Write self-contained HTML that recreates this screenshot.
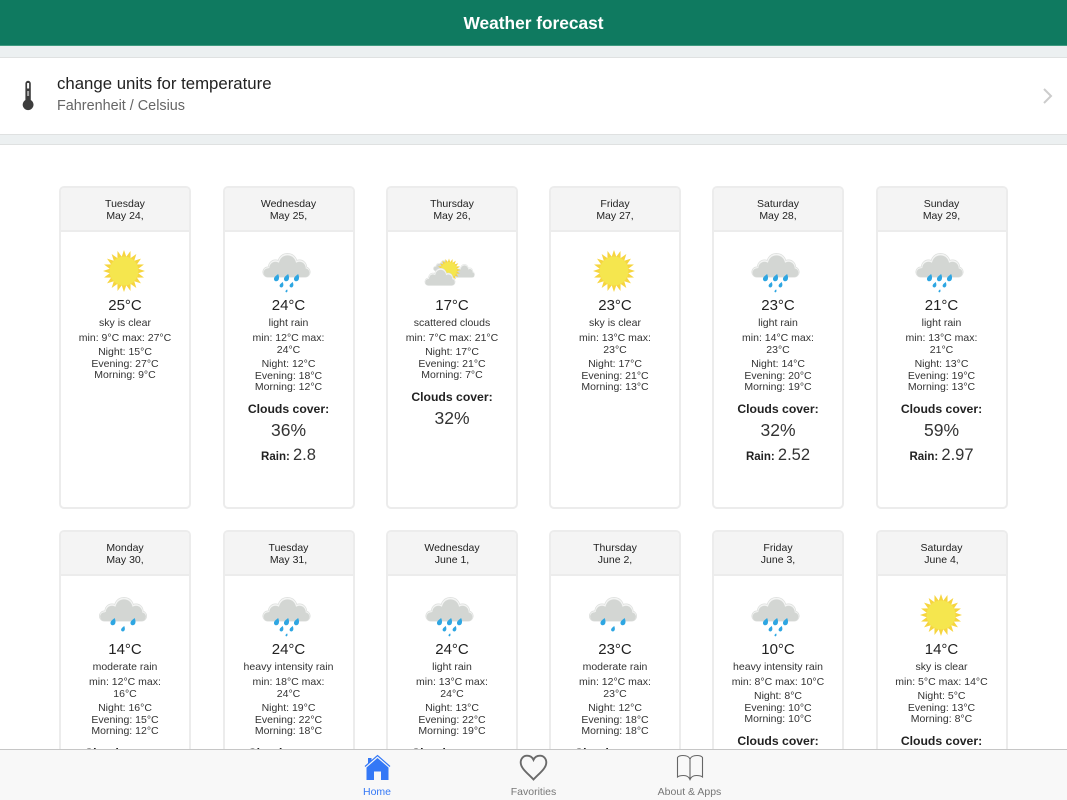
<!DOCTYPE html>
<html><head><meta charset="utf-8"><title>Weather forecast</title>
<style>
*{box-sizing:border-box}
html,body{margin:0;padding:0;width:1067px;height:800px;overflow:hidden;background:#fff;font-family:"Liberation Sans",sans-serif;color:#222}
#w{position:relative;width:1067px;height:800px;overflow:hidden;background:#fff}
.top{position:absolute;left:0;top:0;width:1067px;height:46px;background:#0f7a60;border-bottom:1px solid #3f9a80;color:#fff;font-weight:bold;font-size:17.3px;line-height:47px;text-align:center}
.band{position:absolute;left:0;width:1067px;background:#ecf0f1}
.row{position:absolute;left:0;top:57px;width:1067px;height:78px;background:#fff;border-top:1px solid #dfe1e1;border-bottom:1px solid #dfe1e1}
.t1{position:absolute;left:57px;top:84px;transform:translateY(-50%);font-size:16.8px;line-height:20px;color:#222;white-space:nowrap}
.t2{position:absolute;left:57px;top:106px;transform:translateY(-50%);font-size:14.4px;line-height:18px;color:#666;white-space:nowrap}
.c{position:absolute;width:132px;height:323px;background:#fff;border:2px solid #ececec;border-radius:5px;text-align:center;overflow:hidden;font-size:10.5px;line-height:11.5px}
.b{height:219px;border-bottom:0;border-radius:5px 5px 0 0}
.h{height:46px;background:#f4f4f4;border-bottom:2px solid #ececec;padding-top:13px;line-height:11.5px;color:#222;margin:-2px -2px 0;padding-left:2px;padding-right:2px}
.c svg{display:block;margin:14px auto 0;width:60px;height:50px}
.tp{font-size:15px;line-height:18px;height:18px;margin-top:1px}
.ds{margin-top:2px;height:12px;line-height:12px;color:#333;white-space:nowrap}
.mm{margin-top:3px;line-height:12px;white-space:nowrap;color:#333}
.nn{margin-top:3px;color:#333;white-space:nowrap}
.cc{margin-top:3px;font-weight:bold;font-size:12.2px;line-height:24px;color:#222}
.pc{margin-top:-.5px;font-size:17.5px;line-height:20px;color:#333}
.rn{margin-top:5px;font-weight:bold;font-size:11.5px;line-height:20px;color:#222}
.rn span{font-weight:normal;font-size:16.5px;color:#333}
.bar{position:absolute;left:0;top:749px;width:1067px;height:51px;background:#f8f8f8;border-top:1px solid #c6c6c6}
.lb{position:absolute;top:792px;transform:translate(-50%,-50%);font-size:10.5px;line-height:12px;color:#777;white-space:nowrap}
</style></head><body><div id="w">
<svg width="0" height="0" style="position:absolute">
<defs>
<g id="st">
<polygon fill="#f6d53f" points="21,0 14.32,2.27 19.97,6.49 12.92,6.58 16.99,12.35 10.25,10.25 12.35,16.99 6.58,12.92 6.49,19.97 2.27,14.32 0,21 -2.27,14.32 -6.49,19.97 -6.58,12.92 -12.35,16.99 -10.25,10.25 -16.99,12.35 -12.92,6.58 -19.97,6.49 -14.32,2.27 -21,0 -14.32,-2.27 -19.97,-6.49 -12.92,-6.58 -16.99,-12.35 -10.25,-10.25 -12.35,-16.99 -6.58,-12.92 -6.49,-19.97 -2.27,-14.32 0,-21 2.27,-14.32 6.49,-19.97 6.58,-12.92 12.35,-16.99 10.25,-10.25 16.99,-12.35 12.92,-6.58 19.97,-6.49 14.32,-2.27"/>
<circle r="14.5" fill="#f5e64e"/>
</g>
<symbol id="sun" viewBox="-29 -25 60 50"><use href="#st"/></symbol>
<g id="cl">
<g fill="#dcdedc">
<circle cx="1" cy="-8" r="10"/><circle cx="-11" cy="-4" r="7.5"/><circle cx="13" cy="-4" r="7.5"/><circle cx="-18.5" cy="1" r="5.5"/><circle cx="18.5" cy="1" r="5.5"/><rect x="-18" y="-3" width="36" height="9.5"/>
</g>
<g fill="#f4f5f4">
<circle cx="1" cy="-8" r="9.3"/><circle cx="-11" cy="-4" r="6.8"/><circle cx="13" cy="-4" r="6.8"/><circle cx="-18.5" cy="1" r="4.8"/><circle cx="18.5" cy="1" r="4.8"/>
</g>
<g fill="#d3d6d3">
<circle cx="1" cy="-7" r="8.6"/><circle cx="-11" cy="-3" r="6.2"/><circle cx="13" cy="-3" r="6.2"/><circle cx="-18.5" cy="1.6" r="4.4"/><circle cx="18.5" cy="1.6" r="4.4"/><rect x="-18" y="-3" width="36" height="9"/>
</g>
</g>
<path id="dr" d="M1.6,-4 C2.9,-1.2 2.9,1.7 1.1,2.9 C-.7,4 -2.9,2.6 -2.5,.5 C-2.1,-1.4 .2,-2.7 1.6,-4Z" fill="#2ea6e2"/>
<symbol id="rain" viewBox="-27.5 -25 60 50">
<use href="#cl"/>
<use href="#dr" x="-10" y="7"/><use href="#dr" x="0" y="7"/><use href="#dr" x="10" y="7"/>
<use href="#dr" transform="translate(-5,14) scale(.75)"/><use href="#dr" transform="translate(5,14) scale(.75)"/>
<use href="#dr" transform="translate(0,20) scale(.4)"/>
</symbol>
<symbol id="mod" viewBox="-28 -25 60 50">
<use href="#cl"/>
<use href="#dr" x="-10" y="7"/><use href="#dr" x="10" y="7"/>
<use href="#dr" transform="translate(0,14) scale(.75)"/>
</symbol>
<symbol id="sc" viewBox="-30 -25 60 50">
<g transform="translate(12,3) scale(.45,.55)"><use href="#cl"/></g>
<g transform="translate(-8,-3) scale(.45)"><use href="#cl"/></g>
<g transform="translate(-3,-1) scale(.55)"><use href="#st"/></g>
<g transform="translate(-12,10) scale(.64,.72)"><use href="#cl"/></g>
</symbol>
</defs></svg>

<div class="top">Weather forecast</div>
<div class="band" style="top:46px;height:11px"></div>
<div class="row"></div>
<div class="band" style="top:135px;height:10px;border-bottom:1px solid #dfe1e1"></div>
<svg style="position:absolute;left:20px;top:80px" width="17" height="32" viewBox="0 0 17 32"><path d="M5.4 3.5a2.7 2.7 0 0 1 5.4 0V20a5.4 5.4 0 1 1-5.4 0Z" fill="#3d3d3d"/><rect x="7.1" y="3" width="2" height="5.5" fill="#fff"/><rect x="7.1" y="11" width="2" height="5" fill="#aaa"/></svg>
<div class="t1">change units for temperature</div>
<div class="t2">Fahrenheit / Celsius</div>
<svg style="position:absolute;left:1041px;top:88px" width="12" height="16" viewBox="0 0 12 16"><path d="M3 1L10 8L3 15" fill="none" stroke="#cccccc" stroke-width="2"/></svg>

<div class="c" style="left:59px;top:186px"><div class="h">Tuesday<br>May 24,</div><svg><use href="#sun"/></svg><div class="tp">25°C</div><div class="ds">sky is clear</div><div class="mm">min: 9°C max: 27°C</div><div class="nn">Night: 15°C<br>Evening: 27°C<br>Morning: 9°C</div></div>
<div class="c" style="left:222.5px;top:186px"><div class="h">Wednesday<br>May 25,</div><svg><use href="#rain"/></svg><div class="tp">24°C</div><div class="ds">light rain</div><div class="mm">min: 12°C max:<br>24°C</div><div class="nn">Night: 12°C<br>Evening: 18°C<br>Morning: 12°C</div><div class="cc">Clouds cover:</div><div class="pc">36%</div><div class="rn">Rain: <span>2.8</span></div></div>
<div class="c" style="left:386px;top:186px"><div class="h">Thursday<br>May 26,</div><svg><use href="#sc"/></svg><div class="tp">17°C</div><div class="ds">scattered clouds</div><div class="mm">min: 7°C max: 21°C</div><div class="nn">Night: 17°C<br>Evening: 21°C<br>Morning: 7°C</div><div class="cc">Clouds cover:</div><div class="pc">32%</div></div>
<div class="c" style="left:549px;top:186px"><div class="h">Friday<br>May 27,</div><svg><use href="#sun"/></svg><div class="tp">23°C</div><div class="ds">sky is clear</div><div class="mm">min: 13°C max:<br>23°C</div><div class="nn">Night: 17°C<br>Evening: 21°C<br>Morning: 13°C</div></div>
<div class="c" style="left:712px;top:186px"><div class="h">Saturday<br>May 28,</div><svg><use href="#rain"/></svg><div class="tp">23°C</div><div class="ds">light rain</div><div class="mm">min: 14°C max:<br>23°C</div><div class="nn">Night: 14°C<br>Evening: 20°C<br>Morning: 19°C</div><div class="cc">Clouds cover:</div><div class="pc">32%</div><div class="rn">Rain: <span>2.52</span></div></div>
<div class="c" style="left:875.5px;top:186px"><div class="h">Sunday<br>May 29,</div><svg><use href="#rain"/></svg><div class="tp">21°C</div><div class="ds">light rain</div><div class="mm">min: 13°C max:<br>21°C</div><div class="nn">Night: 13°C<br>Evening: 19°C<br>Morning: 13°C</div><div class="cc">Clouds cover:</div><div class="pc">59%</div><div class="rn">Rain: <span>2.97</span></div></div>

<div class="c b" style="left:59px;top:530px"><div class="h">Monday<br>May 30,</div><svg><use href="#mod"/></svg><div class="tp">14°C</div><div class="ds">moderate rain</div><div class="mm">min: 12°C max:<br>16°C</div><div class="nn">Night: 16°C<br>Evening: 15°C<br>Morning: 12°C</div><div class="cc">Clouds cover:</div></div>
<div class="c b" style="left:222.5px;top:530px"><div class="h">Tuesday<br>May 31,</div><svg><use href="#rain"/></svg><div class="tp">24°C</div><div class="ds">heavy intensity rain</div><div class="mm">min: 18°C max:<br>24°C</div><div class="nn">Night: 19°C<br>Evening: 22°C<br>Morning: 18°C</div><div class="cc">Clouds cover:</div></div>
<div class="c b" style="left:386px;top:530px"><div class="h">Wednesday<br>June 1,</div><svg><use href="#rain"/></svg><div class="tp">24°C</div><div class="ds">light rain</div><div class="mm">min: 13°C max:<br>24°C</div><div class="nn">Night: 13°C<br>Evening: 22°C<br>Morning: 19°C</div><div class="cc">Clouds cover:</div></div>
<div class="c b" style="left:549px;top:530px"><div class="h">Thursday<br>June 2,</div><svg><use href="#mod"/></svg><div class="tp">23°C</div><div class="ds">moderate rain</div><div class="mm">min: 12°C max:<br>23°C</div><div class="nn">Night: 12°C<br>Evening: 18°C<br>Morning: 18°C</div><div class="cc">Clouds cover:</div></div>
<div class="c b" style="left:712px;top:530px"><div class="h">Friday<br>June 3,</div><svg><use href="#rain"/></svg><div class="tp">10°C</div><div class="ds">heavy intensity rain</div><div class="mm">min: 8°C max: 10°C</div><div class="nn">Night: 8°C<br>Evening: 10°C<br>Morning: 10°C</div><div class="cc">Clouds cover:</div></div>
<div class="c b" style="left:875.5px;top:530px"><div class="h">Saturday<br>June 4,</div><svg><use href="#sun"/></svg><div class="tp">14°C</div><div class="ds">sky is clear</div><div class="mm">min: 5°C max: 14°C</div><div class="nn">Night: 5°C<br>Evening: 13°C<br>Morning: 8°C</div><div class="cc">Clouds cover:</div></div>

<div class="bar"></div>
<svg style="position:absolute;left:364px;top:754px" width="27" height="27" viewBox="0 0 27 27"><path d="M1 12.5L13.5 1.5L26 12.5" fill="none" stroke="#3478f6" stroke-width="1.2"/><path d="M4 4h3.5v3L4 10Z" fill="#3478f6"/><path d="M13.5 4L24.5 13.5V26H17V17.5H10V26H2.5V13.5Z" fill="#3478f6"/></svg>
<div class="lb" style="left:377px;color:#3478f6">Home</div>
<svg style="position:absolute;left:519px;top:754px" width="29" height="27" viewBox="0 0 29 27"><path d="M14.5 25.5C9 19.5 1.7 14.5 1.7 8.5C1.7 4.5 4.5 1.7 8 1.7C10.8 1.7 13.3 3.2 14.5 5.8C15.7 3.2 18.2 1.7 21 1.7C24.5 1.7 27.3 4.5 27.3 8.5C27.3 14.5 20 19.5 14.5 25.5Z" fill="none" stroke="#6a6a6a" stroke-width="1.9"/></svg>
<div class="lb" style="left:533.5px">Favorities</div>
<svg style="position:absolute;left:676px;top:754px" width="28" height="27" viewBox="0 0 28 27"><path d="M14 5C13 2.5 11 1.5 7 1.5C4.5 1.5 2.5 2 1.5 3.5V23C3 21.8 5 21.5 7.5 21.5C10.5 21.5 13 23 14 25.5C15 23 17.5 21.5 20.5 21.5C23 21.5 25 21.8 26.5 23V3.5C25.5 2 23.5 1.5 21 1.5C17 1.5 15 2.5 14 5ZM14 5V25.5" fill="none" stroke="#666" stroke-width="1.1"/></svg>
<div class="lb" style="left:689.5px">About &amp; Apps</div>
</div></body></html>
